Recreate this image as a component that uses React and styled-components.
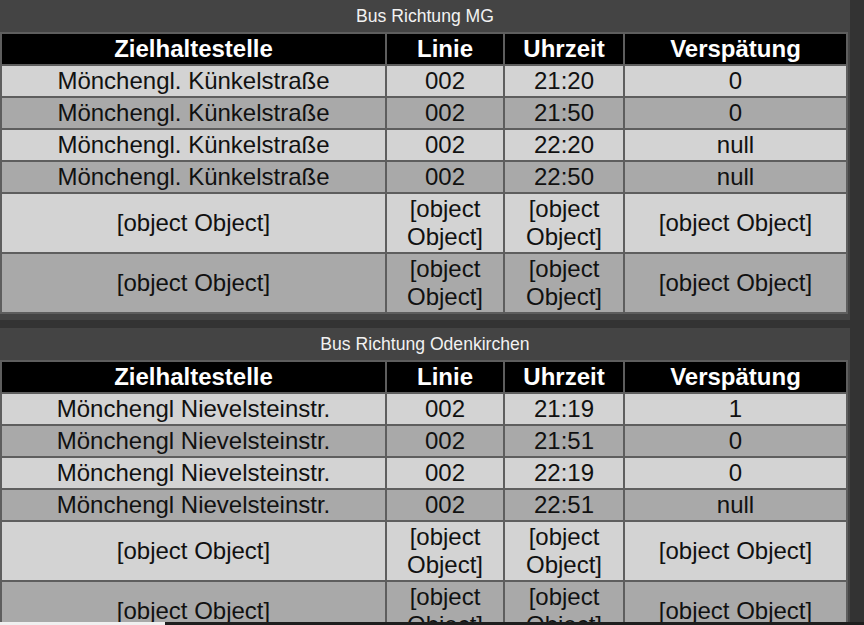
import React from 'react'
import styled, { createGlobalStyle } from 'styled-components'

const GlobalStyle = createGlobalStyle`
  html, body {
    margin: 0;
    padding: 0;
    background: #333333;
    font-family: 'Liberation Sans', Arial, sans-serif;
    overflow: hidden;
  }
`

const Page = styled.div`
  width: 864px;
  min-height: 625px;
  background: #333333;
`

const Panel = styled.section`
  width: 850px;
  background: #444444;
  padding-bottom: 6px;
  margin-bottom: 8px;
`

const Title = styled.div`
  height: 32px;
  display: flex;
  align-items: center;
  justify-content: center;
  color: #f2f2f2;
  font-size: 17.6px;
`

const Table = styled.table`
  width: 848px;
  table-layout: fixed;
  border-collapse: separate;
  border-spacing: 2px;
  background: #5e5e5e;
  font-size: 24px;
  line-height: 28px;
`

const Th = styled.th`
  background: #000;
  color: #fff;
  font-weight: bold;
  padding: 1px;
  text-align: center;
`

const Td = styled.td`
  background: ${(p) => (p.$dark ? '#a9a9a9' : '#d3d3d3')};
  color: #111;
  padding: 1px;
  text-align: center;
  vertical-align: middle;
`

const BottomStrip = styled.div`
  position: fixed;
  left: 0;
  right: 0;
  bottom: 0;
  height: 3px;
  display: flex;
  span:first-child {
    width: 165px;
    background: #f0f0f0;
  }
  span:last-child {
    flex: 1;
    background: #1e1e1e;
  }
`

const OBJ = '[object Object]'

const sections = [
  {
    title: 'Bus Richtung MG',
    rows: [
      ['Mönchengl. Künkelstraße', '002', '21:20', '0'],
      ['Mönchengl. Künkelstraße', '002', '21:50', '0'],
      ['Mönchengl. Künkelstraße', '002', '22:20', 'null'],
      ['Mönchengl. Künkelstraße', '002', '22:50', 'null'],
      [OBJ, OBJ, OBJ, OBJ],
      [OBJ, OBJ, OBJ, OBJ],
    ],
  },
  {
    title: 'Bus Richtung Odenkirchen',
    rows: [
      ['Mönchengl Nievelsteinstr.', '002', '21:19', '1'],
      ['Mönchengl Nievelsteinstr.', '002', '21:51', '0'],
      ['Mönchengl Nievelsteinstr.', '002', '22:19', '0'],
      ['Mönchengl Nievelsteinstr.', '002', '22:51', 'null'],
      [OBJ, OBJ, OBJ, OBJ],
      [OBJ, OBJ, OBJ, OBJ],
    ],
  },
]

const App = () => {
  return (
    <Page>
      <GlobalStyle />
      {sections.map((s) => (
        <Panel key={s.title}>
          <Title>{s.title}</Title>
          <Table>
            <colgroup>
              <col style={{ width: 383 }} />
              <col style={{ width: 116 }} />
              <col style={{ width: 118 }} />
              <col />
            </colgroup>
            <thead>
              <tr>
                <Th>Zielhaltestelle</Th>
                <Th>Linie</Th>
                <Th>Uhrzeit</Th>
                <Th>Verspätung</Th>
              </tr>
            </thead>
            <tbody>
              {s.rows.map((row, i) => (
                <tr key={i}>
                  {row.map((cell, j) => (
                    <Td key={j} $dark={i % 2 === 1}>
                      {cell}
                    </Td>
                  ))}
                </tr>
              ))}
            </tbody>
          </Table>
        </Panel>
      ))}
      <BottomStrip>
        <span />
        <span />
      </BottomStrip>
    </Page>
  )
}

export default App
